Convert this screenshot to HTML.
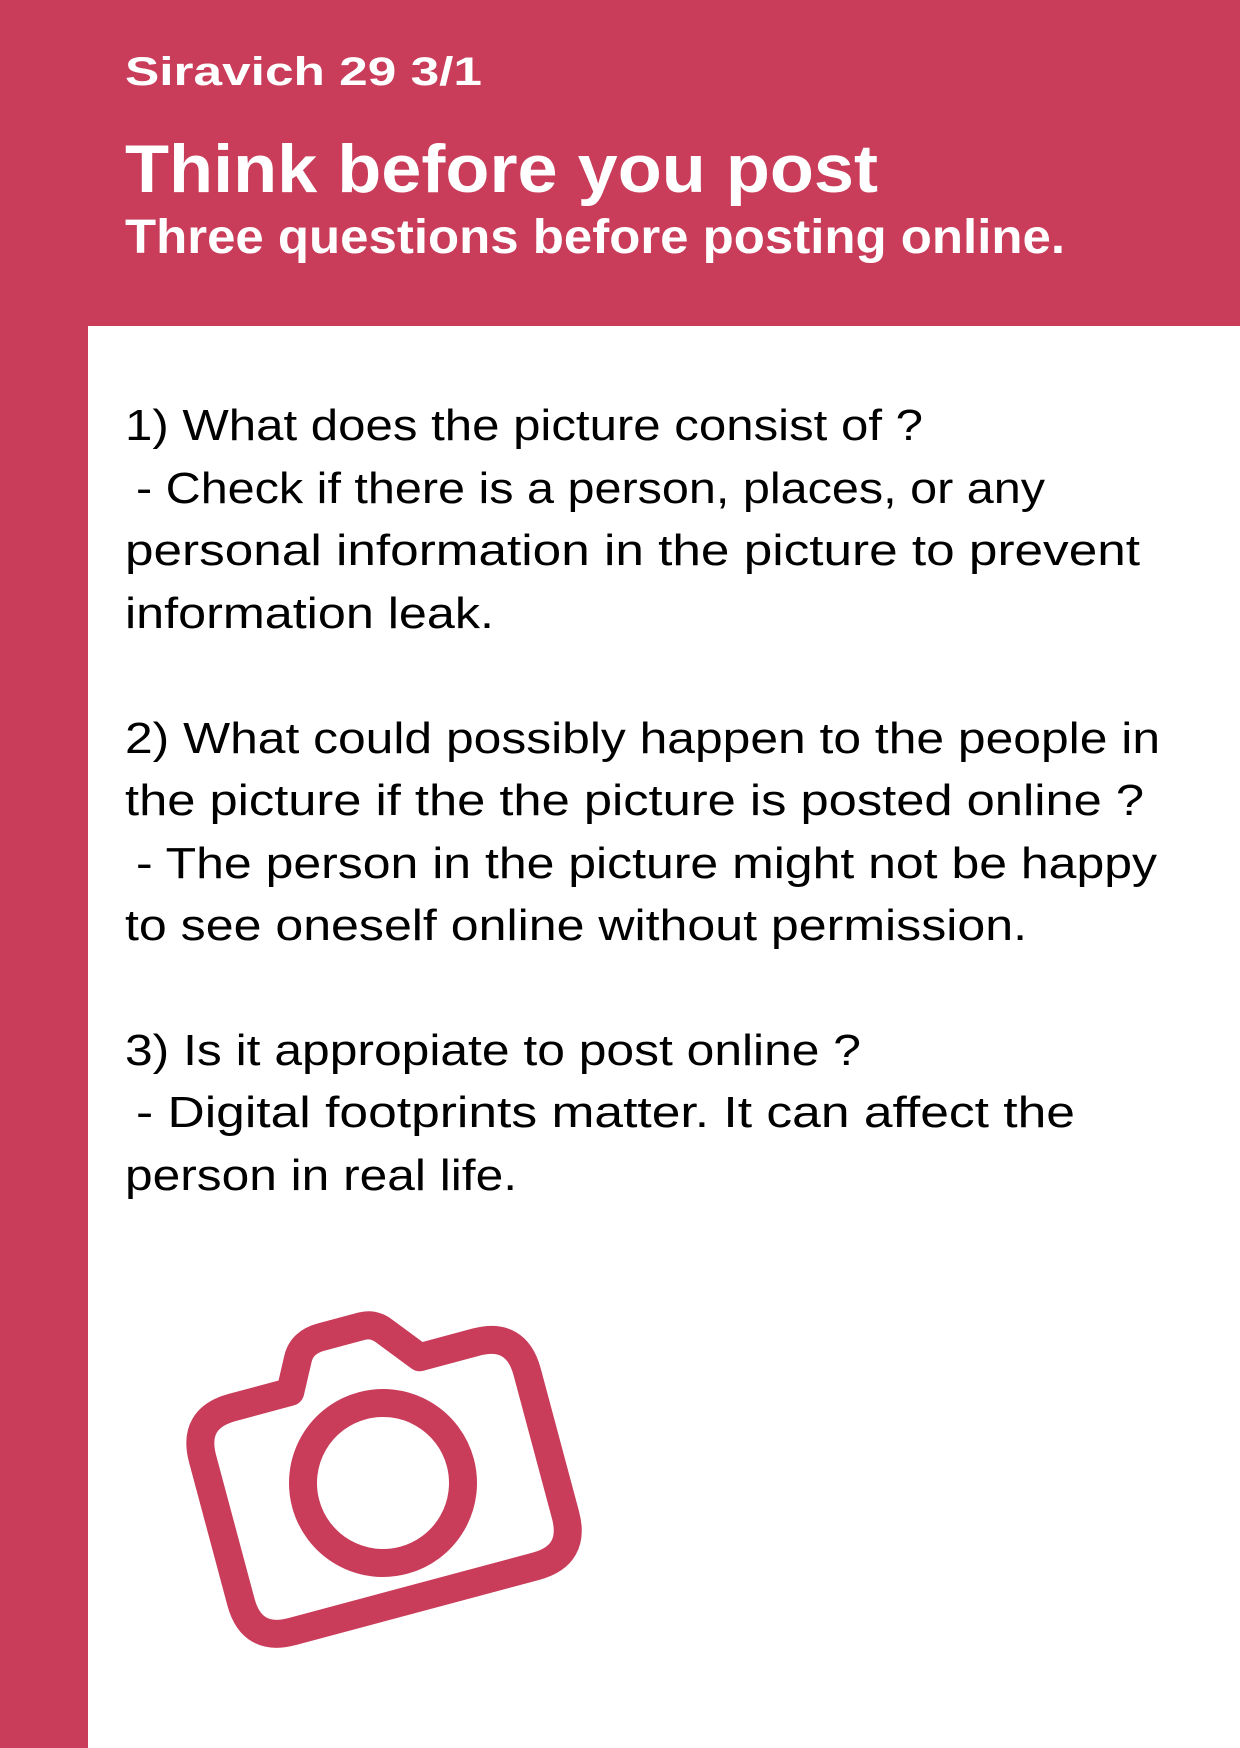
<!DOCTYPE html>
<html><head><meta charset="utf-8"><style>
html,body{margin:0;padding:0;background:#fff}
svg{display:block}
</style></head><body>
<svg width="1240" height="1748" viewBox="0 0 1240 1748" xmlns="http://www.w3.org/2000/svg">
<rect x="0" y="0" width="1240" height="1748" fill="#fff"/>
<rect x="0" y="0" width="1240" height="326" fill="#c93c5a"/>
<rect x="0" y="0" width="88" height="1748" fill="#c93c5a"/>
<g font-family="Liberation Sans, sans-serif" fill="#fff" font-weight="bold">
<text x="125" y="85" font-size="40" textLength="357" lengthAdjust="spacingAndGlyphs">Siravich 29 3/1</text>
<text x="125" y="192" font-size="68" textLength="753" lengthAdjust="spacingAndGlyphs">Think before you post</text>
<text x="125" y="253" font-size="48" textLength="940" lengthAdjust="spacingAndGlyphs">Three questions before posting online.</text>
</g>
<g font-family="Liberation Sans, sans-serif" fill="#000" font-size="44">
<text x="125" y="440" textLength="798" lengthAdjust="spacingAndGlyphs">1) What does the picture consist of ?</text>
<text x="136" y="503" textLength="909" lengthAdjust="spacingAndGlyphs">- Check if there is a person, places, or any</text>
<text x="125" y="565" textLength="1015" lengthAdjust="spacingAndGlyphs">personal information in the picture to prevent</text>
<text x="125" y="628" textLength="369" lengthAdjust="spacingAndGlyphs">information leak.</text>
<text x="125" y="753" textLength="1035" lengthAdjust="spacingAndGlyphs">2) What could possibly happen to the people in</text>
<text x="125" y="815" textLength="1019" lengthAdjust="spacingAndGlyphs">the picture if the the picture is posted online ?</text>
<text x="136" y="878" textLength="1021" lengthAdjust="spacingAndGlyphs">- The person in the picture might not be happy</text>
<text x="125" y="940" textLength="902" lengthAdjust="spacingAndGlyphs">to see oneself online without permission.</text>
<text x="125" y="1065" textLength="736" lengthAdjust="spacingAndGlyphs">3) Is it appropiate to post online ?</text>
<text x="136" y="1127" textLength="939" lengthAdjust="spacingAndGlyphs">- Digital footprints matter. It can affect the</text>
<text x="125" y="1190" textLength="392" lengthAdjust="spacingAndGlyphs">person in real life.</text>
</g>
<g transform="translate(383,1483) rotate(-15)" fill="none" stroke="#c93c5a" stroke-width="28" stroke-linejoin="round">
<path d="M -126,-112 L -66,-112 L -50,-142 Q -42,-157 -22,-157 L 20,-157 Q 32,-157 40,-147 L 68,-112 L 126,-112 Q 168,-112 168,-70 L 168,78 Q 168,120 126,120 L -126,120 Q -168,120 -168,78 L -168,-70 Q -168,-112 -126,-112 Z"/>
<circle cx="0" cy="0" r="80"/>
</g>
</svg>
</body></html>
